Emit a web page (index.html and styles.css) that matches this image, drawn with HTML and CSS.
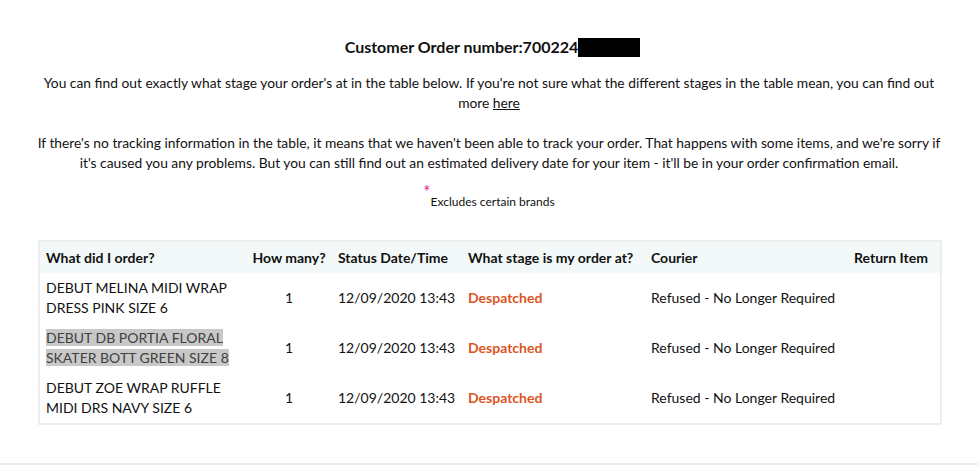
FILE: index.html
```html
<!DOCTYPE html>
<html lang="en">
<head>
<meta charset="utf-8">
<title>Order tracking</title>
<link rel="stylesheet" href="styles.css">
</head>
<body>
<main class="page">
  <section class="content">
    <h1 class="title">Customer Order number:700224<span class="redact"></span></h1>
    <p class="intro">You can find out exactly what stage your order's at in the table below. If you're not sure what the different stages in the table mean, you can find out more <a href="#" class="link">here</a></p>
    <p class="intro">If there's no tracking information in the table, it means that we haven't been able to track your order. That happens with some items, and we're sorry if it's caused you any problems. But you can still find out an estimated delivery date for your item - it'll be in your order confirmation email.</p>
    <p class="note"><span class="star">*</span><span class="note-text">Excludes certain brands</span></p>
    <table class="orders">
      <colgroup>
        <col class="c1"><col class="c2"><col class="c3"><col class="c4"><col class="c5"><col class="c6">
      </colgroup>
      <thead>
        <tr>
          <th>What did I order?</th>
          <th class="center">How many?</th>
          <th>Status Date/Time</th>
          <th>What stage is my order at?</th>
          <th>Courier</th>
          <th>Return Item</th>
        </tr>
      </thead>
      <tbody>
        <tr>
          <td>DEBUT MELINA MIDI WRAP DRESS PINK SIZE 6</td>
          <td class="center">1</td>
          <td>12/09/2020 13:43</td>
          <td class="stage">Despatched</td>
          <td>Refused - No Longer Required</td>
          <td></td>
        </tr>
        <tr>
          <td><span class="sel">DEBUT DB PORTIA FLORAL SKATER BOTT GREEN SIZE 8</span></td>
          <td class="center">1</td>
          <td>12/09/2020 13:43</td>
          <td class="stage">Despatched</td>
          <td>Refused - No Longer Required</td>
          <td></td>
        </tr>
        <tr>
          <td>DEBUT ZOE WRAP RUFFLE MIDI DRS NAVY SIZE 6</td>
          <td class="center">1</td>
          <td>12/09/2020 13:43</td>
          <td class="stage">Despatched</td>
          <td>Refused - No Longer Required</td>
          <td></td>
        </tr>
      </tbody>
    </table>
  </section>
  <footer class="foot"></footer>
</main>
</body>
</html>
```
FILE: styles.css
```css
html, body {
  margin: 0;
  padding: 0;
  background: #fff;
}
body {
  font-family: Lato, "Open Sans", sans-serif;
  color: #111;
  font-size: 14px;
}
.page {
  height: 465px;
  display: flex;
  flex-direction: column;
}
.content {
  width: 902px;
  margin: 0 auto;
  padding-top: 37px;
  flex: 1;
}
.title {
  font-size: 16px;
  font-weight: 700;
  text-align: center;
  margin: 0 0 16px;
  line-height: 20px;
  padding-left: 7px;
}
.redact {
  display: inline-block;
  width: 62px;
  height: 19px;
  background: #000;
  vertical-align: -4px;
}
.intro {
  text-align: center;
  line-height: 20px;
  margin: 0 -4px 20px;
  font-size: 13.8px;
}
.link {
  color: #111;
  text-decoration: underline;
}
.note {
  text-align: center;
  margin: -8px 0 0;
  line-height: 14px;
}
.star {
  color: #e0287f;
  font-size: 17px;
  vertical-align: 8px;
}
.note-text {
  font-size: 12px;
}
.orders {
  margin-top: 31px;
  width: 902px;
  border-collapse: collapse;
  table-layout: fixed;
  border: 2px solid #eeeeee;
}
.c1 { width: 207px; }
.c2 { width: 86px; }
.c3 { width: 130px; }
.c4 { width: 183px; }
.c5 { width: 203px; }
.c6 { width: 93px; }
.orders th {
  background: #f2f9f8;
  font-weight: 700;
  text-align: left;
  height: 31px;
  padding: 0 6px;
  line-height: 20px;
  white-space: nowrap;
}
.orders td {
  height: 50px;
  padding: 0 6px;
  line-height: 20px;
  vertical-align: middle;
}
.orders .center {
  text-align: center;
}
.orders .stage {
  color: #dc5525;
  font-weight: 700;
}
.sel {
  background: #c8c8c8;
  color: #404040;
}
.foot {
  height: 2px;
  background: #ececec;
  flex: none;
}
```
